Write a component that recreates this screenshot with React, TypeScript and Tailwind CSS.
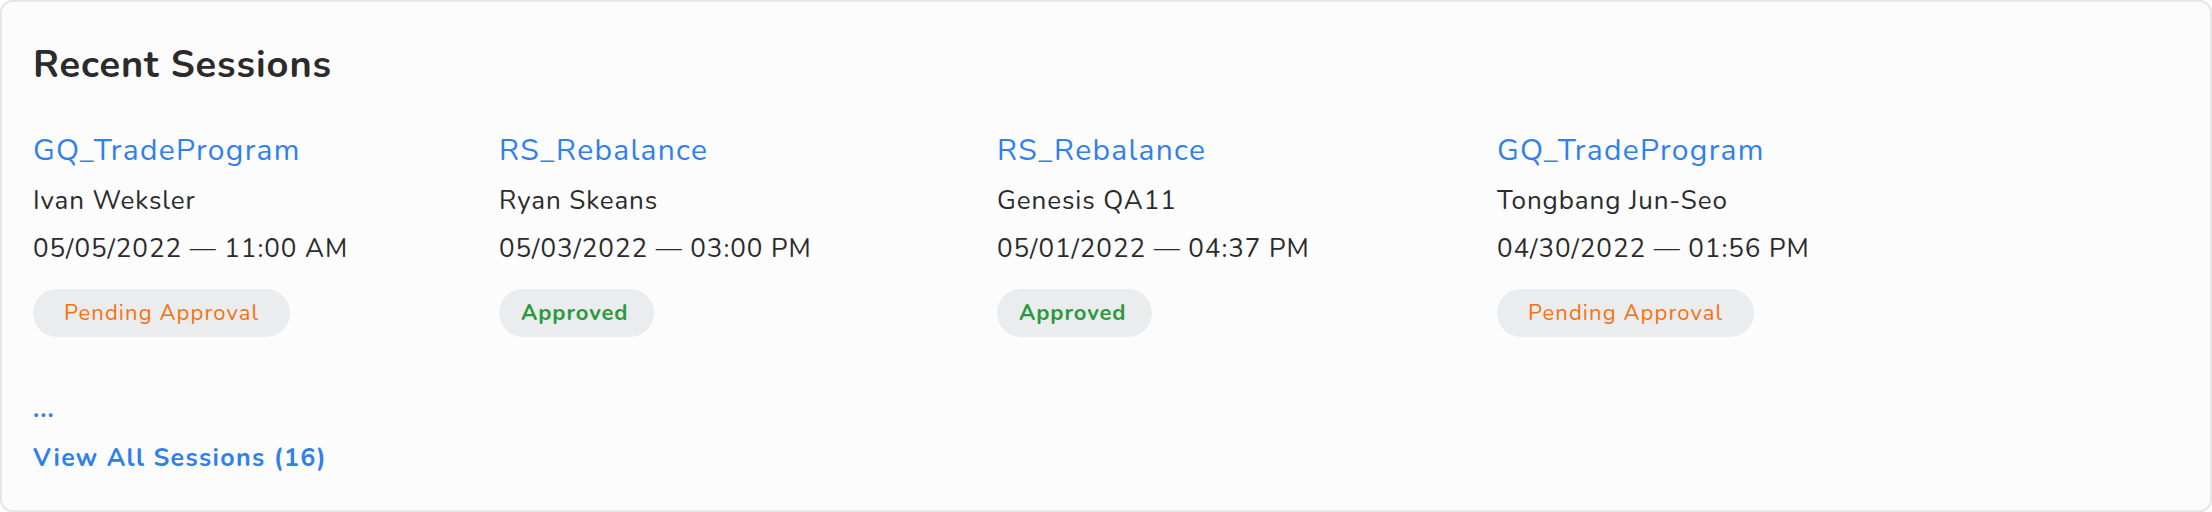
import React from "react";

type Session = {
  name: string;
  user: string;
  date: string;
  status: "pending" | "approved";
};

const sessions: Session[] = [
  { name: "GQ_TradeProgram", user: "Ivan Weksler", date: "05/05/2022 — 11:00 AM", status: "pending" },
  { name: "RS_Rebalance", user: "Ryan Skeans", date: "05/03/2022 — 03:00 PM", status: "approved" },
  { name: "RS_Rebalance", user: "Genesis QA11", date: "05/01/2022 — 04:37 PM", status: "approved" },
  { name: "GQ_TradeProgram", user: "Tongbang Jun-Seo", date: "04/30/2022 — 01:56 PM", status: "pending" },
];

function Badge({ status }: { status: Session["status"] }) {
  if (status === "pending") {
    return (
      <span className="inline-flex h-[48px] items-center rounded-full bg-[#ebecee] px-[31px] text-[22px] font-normal tracking-[1.1px] text-[#f4730f]">
        Pending Approval
      </span>
    );
  }
  return (
    <span className="inline-flex h-[48px] items-center rounded-full bg-[#ebecee] pl-[22px] pr-[26px] text-[22px] font-bold tracking-[0.9px] text-[#2b9a3c]">
      Approved
    </span>
  );
}

export default function App() {
  return (
    <div
      className="h-[512px] w-full bg-white"
      style={{ fontFamily: "Nunito, Lato, 'Open Sans', sans-serif" }}
    >
      <div className="flex h-[512px] flex-col rounded-[12px] border-2 border-[#e6e6e6] bg-[#fcfcfc] pl-[31px] pt-[40px] text-[#2b2b2b]">
        <h2 className="text-[38px] font-bold leading-[46px] tracking-[0.9px] text-[#2b2b2b]">Recent Sessions</h2>
        <div className="mt-[39px] grid grid-cols-[466px_498px_500px_1fr]">
          {sessions.map((s, i) => (
            <div key={i} className="flex flex-col items-start">
              <a className="text-[30px] leading-[48px] tracking-[1.3px] text-[#2f80ed]">{s.name}</a>
              <div className="mt-[2px] text-[26px] leading-[48px] tracking-[0.9px]">{s.user}</div>
              <div className="text-[26px] leading-[48px] tracking-[0.95px]">{s.date}</div>
              <div className="mt-[16px]">
                <Badge status={s.status} />
              </div>
            </div>
          ))}
        </div>
        <div className="mt-[57px] text-[25px] font-bold leading-[30px] tracking-[1px] text-[#2f80ed]">...</div>
        <a className="mt-[19px] text-[25px] font-bold leading-[30px] tracking-[1.35px] text-[#2f80ed]">View All Sessions (16)</a>
      </div>
    </div>
  );
}
